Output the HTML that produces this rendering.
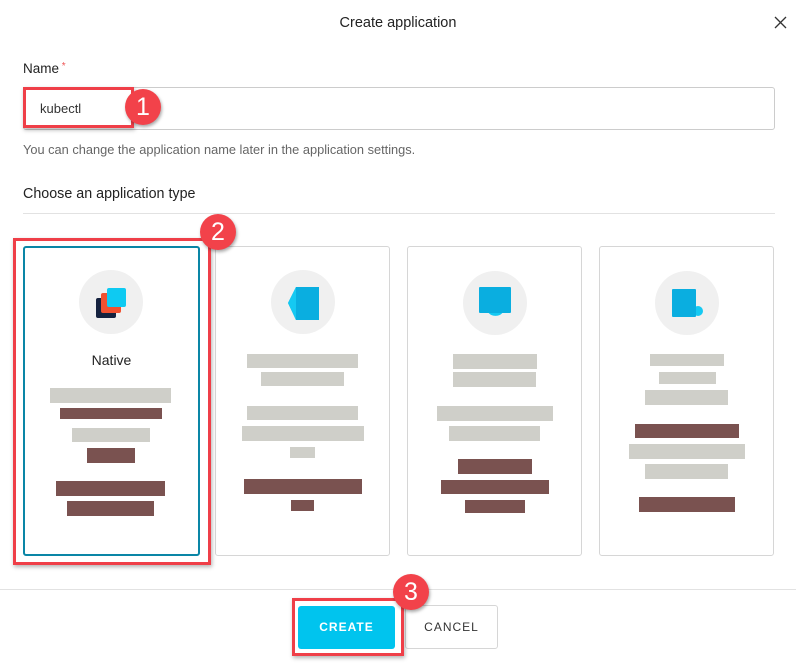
<!DOCTYPE html><html><head><style>
body{margin:0;width:796px;height:664px;background:#fff;font-family:"Liberation Sans",sans-serif;position:relative;overflow:hidden}
.a{position:absolute}
.g{position:absolute;background:#cfcfc9}
.b{position:absolute;background:#7a5250}
.card{position:absolute;top:246px;height:310px;border:1px solid #d6d6d6;border-radius:3px;box-sizing:border-box}
.circ{position:absolute;width:64px;height:64px;border-radius:50%;background:#f0f0f0}
.badge{position:absolute;width:36px;height:36px;border-radius:50%;background:#f2424a;color:#fff;font-size:25px;text-align:center;line-height:36px;box-shadow:1px 2px 3px rgba(0,0,0,.35)}
.red{position:absolute;border:3px solid #ef3f48;box-shadow:1px 2px 4px rgba(0,0,0,.3);box-sizing:border-box}
</style></head><body>
<div class="a" style="left:0;width:796px;top:15px;text-align:center;font-size:14.5px;color:#222">Create application</div>
<svg class="a" style="left:774px;top:16px" width="13" height="13"><path d="M1 1L12 12M12 1L1 12" stroke="#333" stroke-width="1.3"/></svg>
<div class="a" style="left:23px;top:61px;font-size:13.5px;color:#222">Name<span style="color:#e55;font-size:10px;vertical-align:top"> *</span></div>
<div class="a" style="left:23px;top:87px;width:752px;height:43px;border:1px solid #ccc;border-radius:3px;box-sizing:border-box"></div>
<div class="a" style="left:40px;top:101px;font-size:13px;color:#333">kubectl</div>
<div class="red" style="left:23px;top:87px;width:111px;height:41px"></div>
<div class="badge" style="left:125px;top:89px">1</div>
<div class="a" style="left:23px;top:142px;font-size:12.8px;color:#666">You can change the application name later in the application settings.</div>
<div class="a" style="left:23px;top:186px;font-size:14.3px;color:#222">Choose an application type</div>
<div class="a" style="left:23px;top:213px;width:752px;height:1px;background:#e2e2e2"></div>

<div class="card" style="left:23px;width:177px;border:2px solid #0a86a6"></div>
<div class="card" style="left:215px;width:175px"></div>
<div class="card" style="left:407px;width:175px"></div>
<div class="card" style="left:599px;width:175px"></div>
<div class="red" style="left:13px;top:238px;width:198px;height:327px"></div>
<div class="badge" style="left:200px;top:214px">2</div>

<div class="circ" style="left:79px;top:270px"></div>
<div class="a" style="left:96px;top:298px;width:20px;height:20px;background:#15223f;border-radius:2px"></div>
<div class="a" style="left:101px;top:293px;width:20px;height:20px;background:#f1502f;border-radius:2px"></div>
<div class="a" style="left:107px;top:288px;width:19px;height:19px;background:#0ecaf2;border-radius:2px"></div>
<div class="a" style="left:23px;width:177px;top:352px;text-align:center;font-size:14px;color:#222">Native</div>

<div class="circ" style="left:271px;top:270px"></div>
<svg class="a" style="left:287px;top:286px" width="34" height="36"><path d="M9 1H32V34H9L1 17Z" fill="#0aaee0"/><path d="M9 1L1 17L9 34Z" fill="#15c9f2"/></svg>
<div class="circ" style="left:463px;top:271px"></div>
<svg class="a" style="left:478px;top:286px" width="35" height="34"><path d="M10 26A8 6 0 0 0 25 26Z" fill="#15c9f2"/><rect x="1" y="1" width="32" height="26" rx="1" fill="#0aaee0"/></svg>
<div class="circ" style="left:655px;top:271px"></div>
<svg class="a" style="left:671px;top:288px" width="33" height="30"><circle cx="27" cy="23" r="5" fill="#15c9f2"/><rect x="1" y="1" width="24" height="28" rx="1" fill="#0aaee0"/></svg>

<div class="g" style="left:50px;top:388px;width:121px;height:15px"></div>
<div class="b" style="left:60px;top:408px;width:102px;height:11px"></div>
<div class="g" style="left:72px;top:428px;width:78px;height:14px"></div>
<div class="b" style="left:87px;top:448px;width:48px;height:15px"></div>
<div class="b" style="left:56px;top:481px;width:109px;height:15px"></div>
<div class="b" style="left:67px;top:501px;width:87px;height:15px"></div>

<div class="g" style="left:247px;top:354px;width:111px;height:14px"></div>
<div class="g" style="left:261px;top:372px;width:83px;height:14px"></div>
<div class="g" style="left:247px;top:406px;width:111px;height:14px"></div>
<div class="g" style="left:242px;top:426px;width:122px;height:15px"></div>
<div class="g" style="left:290px;top:447px;width:25px;height:11px"></div>
<div class="b" style="left:244px;top:479px;width:118px;height:15px"></div>
<div class="b" style="left:291px;top:500px;width:23px;height:11px"></div>

<div class="g" style="left:453px;top:354px;width:84px;height:15px"></div>
<div class="g" style="left:453px;top:372px;width:83px;height:15px"></div>
<div class="g" style="left:437px;top:406px;width:116px;height:15px"></div>
<div class="g" style="left:449px;top:426px;width:91px;height:15px"></div>
<div class="b" style="left:458px;top:459px;width:74px;height:15px"></div>
<div class="b" style="left:441px;top:480px;width:108px;height:14px"></div>
<div class="b" style="left:465px;top:500px;width:60px;height:13px"></div>

<div class="g" style="left:650px;top:354px;width:74px;height:12px"></div>
<div class="g" style="left:659px;top:372px;width:57px;height:12px"></div>
<div class="g" style="left:645px;top:390px;width:83px;height:15px"></div>
<div class="b" style="left:635px;top:424px;width:104px;height:14px"></div>
<div class="g" style="left:629px;top:444px;width:116px;height:15px"></div>
<div class="g" style="left:645px;top:464px;width:83px;height:15px"></div>
<div class="b" style="left:639px;top:497px;width:96px;height:15px"></div>

<div class="a" style="left:0;top:589px;width:796px;height:1px;background:#e2e2e2"></div>
<div class="a" style="left:298px;top:606px;width:97px;height:43px;background:#00c4ee;border-radius:3px;color:#fff;font-size:12px;font-weight:bold;letter-spacing:1px;text-align:center;line-height:43px">CREATE</div>
<div class="a" style="left:405px;top:605px;width:93px;height:44px;border:1px solid #d6d6d6;border-radius:3px;box-sizing:border-box;color:#333;font-size:12px;letter-spacing:1px;text-align:center;line-height:42px">CANCEL</div>
<div class="red" style="left:292px;top:598px;width:112px;height:58px"></div>
<div class="badge" style="left:393px;top:574px">3</div>
</body></html>
